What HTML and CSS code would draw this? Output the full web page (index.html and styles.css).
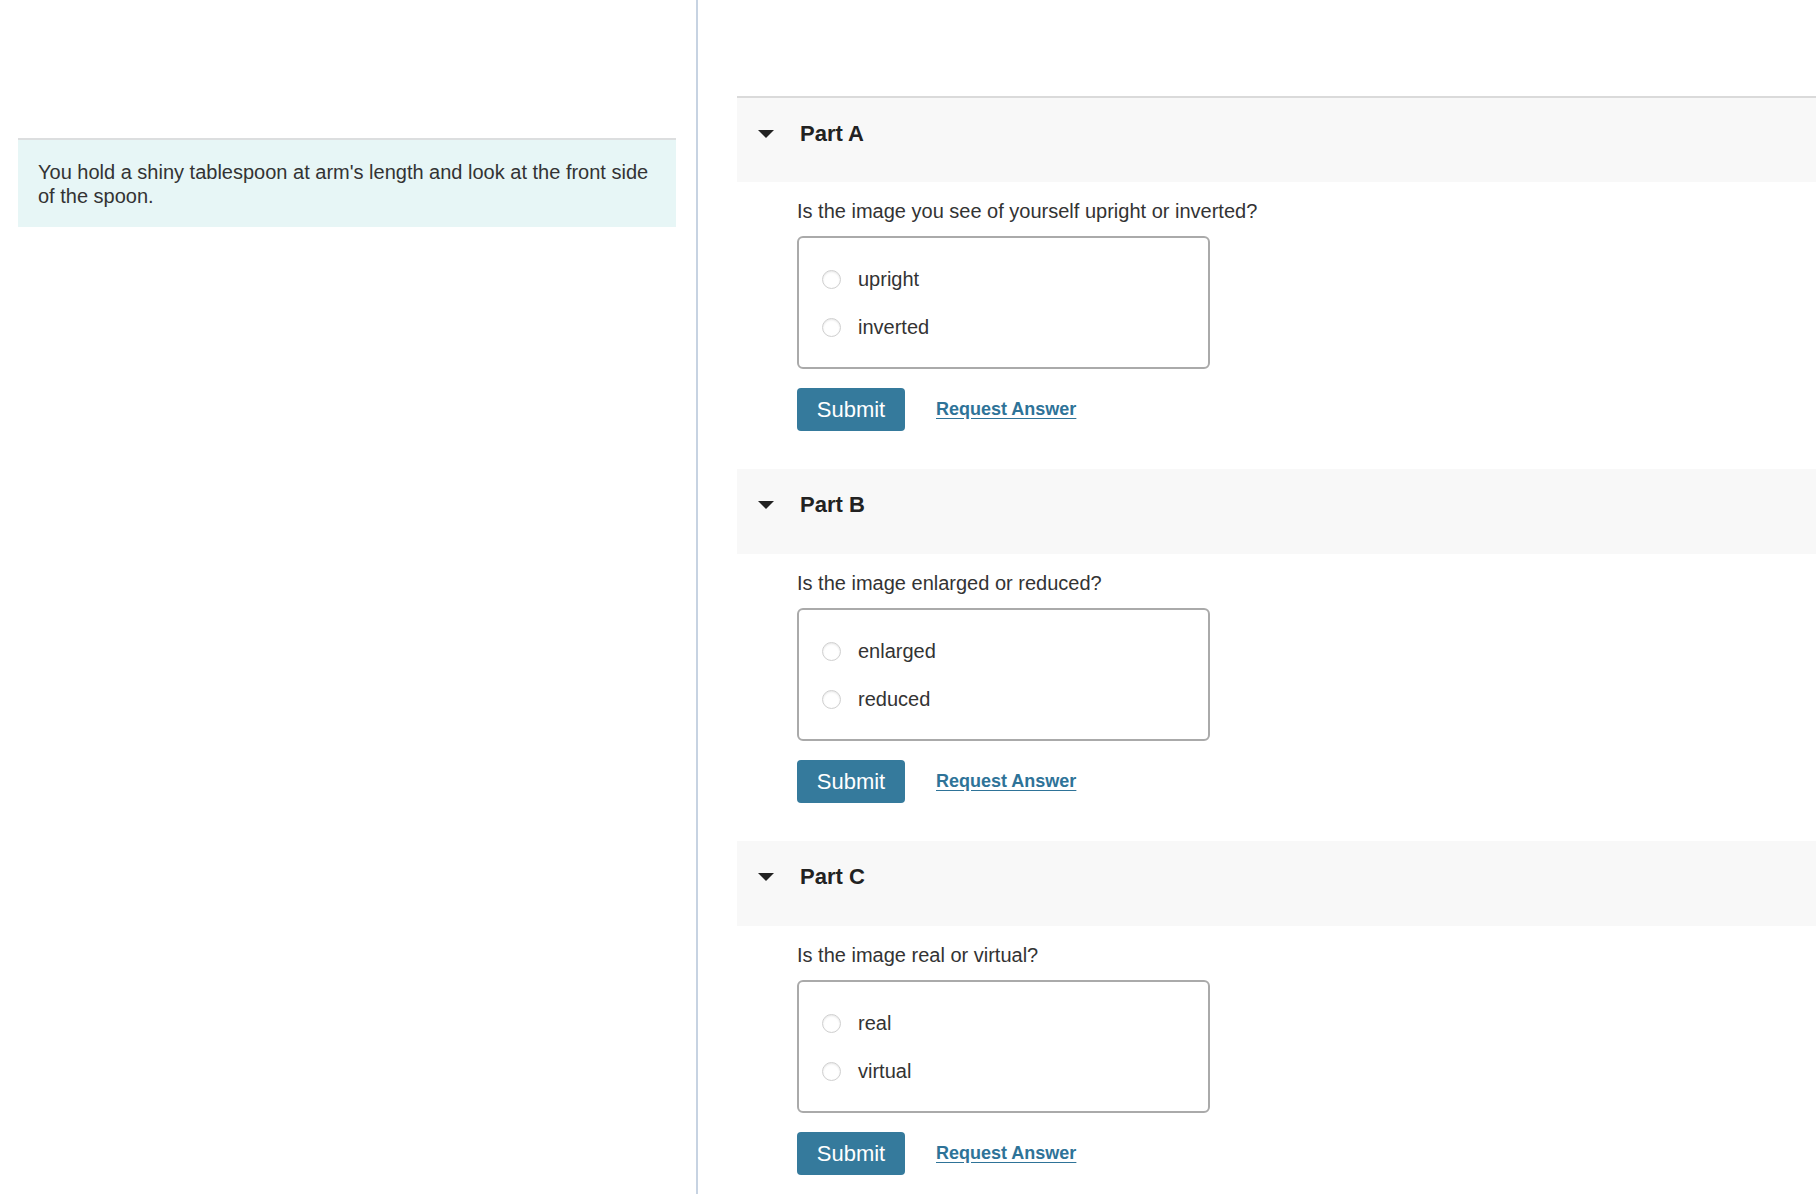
FILE: index.html
```html
<!DOCTYPE html>
<html lang="en">

<head>
  <meta charset="UTF-8" />
  <meta name="viewport" content="width=device-width, initial-scale=1.0" />
  <title>Spoon image</title>
  <link rel="stylesheet" href="styles.css">
</head>

<body>
  <div class="layout">
    <aside class="intro">
      <div class="intro-box">
        You hold a shiny tablespoon at arm's length and look at the front side of the spoon.
      </div>
    </aside>

    <main class="parts">
      <section class="part first">
        <div class="part-head">
          <span class="caret"></span>
          <h2>Part A</h2>
        </div>
        <div class="part-body">
          <p class="question">Is the image you see of yourself upright or inverted?</p>
          <div class="choices">
            <label class="choice"><input type="radio" name="a" /> <span>upright</span></label>
            <label class="choice"><input type="radio" name="a" /> <span>inverted</span></label>
          </div>
          <div class="actions">
            <button class="submit">Submit</button>
            <a href="#" class="request">Request Answer</a>
          </div>
        </div>
      </section>

      <section class="part">
        <div class="part-head">
          <span class="caret"></span>
          <h2>Part B</h2>
        </div>
        <div class="part-body">
          <p class="question">Is the image enlarged or reduced?</p>
          <div class="choices">
            <label class="choice"><input type="radio" name="b" /> <span>enlarged</span></label>
            <label class="choice"><input type="radio" name="b" /> <span>reduced</span></label>
          </div>
          <div class="actions">
            <button class="submit">Submit</button>
            <a href="#" class="request">Request Answer</a>
          </div>
        </div>
      </section>

      <section class="part">
        <div class="part-head">
          <span class="caret"></span>
          <h2>Part C</h2>
        </div>
        <div class="part-body">
          <p class="question">Is the image real or virtual?</p>
          <div class="choices">
            <label class="choice"><input type="radio" name="c" /> <span>real</span></label>
            <label class="choice"><input type="radio" name="c" /> <span>virtual</span></label>
          </div>
          <div class="actions">
            <button class="submit">Submit</button>
            <a href="#" class="request">Request Answer</a>
          </div>
        </div>
      </section>
    </main>
  </div>
</body>

</html>
```

FILE: styles.css
```css
body {
  font-family: "Liberation Sans", Arial, sans-serif;
  margin: 0;
  padding: 0;
  color: #333;
  background: #fff;
}

.layout {
  display: flex;
  min-height: 100vh;
  overflow: hidden;
}

.intro {
  width: 658px;
  flex-shrink: 0;
  padding: 138px 20px 0 18px;
  border-right: 2px solid #c7d3e2;
}

.intro-box {
  background: #e7f6f6;
  border-top: 2px solid #dcdedf;
  padding: 20px 20px 19px 20px;
  font-size: 20px;
  line-height: 24px;
}

.parts {
  flex: 1;
  padding: 96px 0 0 39px;
}

.part-head {
  display: flex;
  align-items: center;
  height: 85px;
  box-sizing: border-box;
  padding: 23px 0 36px 21px;
  background: #f8f8f8;
}

.part.first .part-head {
  height: 86px;
  border-top: 2px solid #dadada;
}

.caret {
  width: 0;
  height: 0;
  border-left: 8px solid transparent;
  border-right: 8px solid transparent;
  border-top: 8px solid #222;
  margin-right: 26px;
}

.part-head h2 {
  margin: 0;
  font-size: 22px;
  line-height: 26px;
  font-weight: bold;
  color: #222;
}

.part-body {
  padding: 17px 0 38px 60px;
}

.question {
  margin: 0 0 13px 0;
  font-size: 20px;
  line-height: 24px;
}

.choices {
  width: 413px;
  box-sizing: border-box;
  border: 2px solid #aaa;
  border-radius: 6px;
  padding: 17px 0 16px 23px;
}

.choice {
  display: flex;
  align-items: center;
  height: 48px;
  font-size: 20px;
  cursor: pointer;
}

.choice input {
  appearance: none;
  -webkit-appearance: none;
  width: 19px;
  height: 19px;
  margin: 0 17px 0 0;
  border: 1px solid #cfcfcf;
  border-radius: 50%;
  background: #fff;
  box-shadow: inset 0 1px 2px rgba(0, 0, 0, 0.1);
}

.actions {
  display: flex;
  align-items: center;
  margin-top: 19px;
  gap: 31px;
}

.submit {
  width: 108px;
  height: 43px;
  border: none;
  border-radius: 4px;
  background: #357a9c;
  color: #fff;
  font-family: inherit;
  font-size: 22px;
  padding: 0;
}

.request {
  font-size: 18px;
  font-weight: bold;
  color: #2e7398;
  text-decoration: underline;
  text-underline-offset: 3px;
}
```
